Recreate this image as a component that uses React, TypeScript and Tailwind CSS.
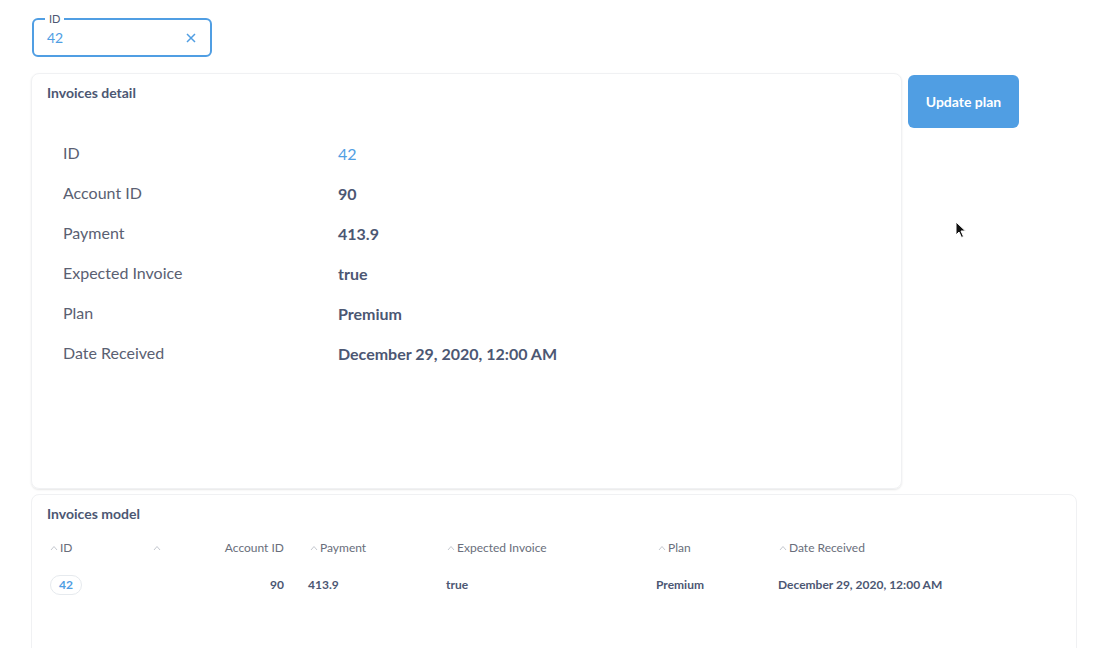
import React from "react";

const font = { fontFamily: "Lato, 'Noto Sans', sans-serif" };

const Caret = () => (
  <svg width="8" height="6" viewBox="0 0 8 6" className="shrink-0">
    <path d="M1 5 L4 1.5 L7 5" fill="none" stroke="#c4c8cf" strokeWidth="1" />
  </svg>
);

const detailRows: { label: string; value: string; link?: boolean }[] = [
  { label: "ID", value: "42", link: true },
  { label: "Account ID", value: "90" },
  { label: "Payment", value: "413.9" },
  { label: "Expected Invoice", value: "true" },
  { label: "Plan", value: "Premium" },
  { label: "Date Received", value: "December 29, 2020, 12:00 AM" },
];

const cols = "grid grid-cols-[103px_155px_138px_210px_122px_1fr]";

const App = () => {
  return (
    <div
      className="relative w-[1104px] h-[648px] overflow-hidden bg-white text-[#4c5773]"
      style={font}
    >
      {/* filter widget */}
      <div className="pl-[32px] pt-[18px]">
        <div className="relative w-[180px] h-[39px] rounded-md border-2 border-[#509ee3] flex items-center justify-between pl-[13px] pr-[14px]">
          <span className="absolute -top-[8px] left-[11px] bg-white px-[4px] text-[11px] leading-[14px] text-[#4c5773]">
            ID
          </span>
          <span className="text-[14px] text-[#509ee3]">42</span>
          <svg width="10" height="10" viewBox="0 0 10 10">
            <path d="M1 1 L9 9 M9 1 L1 9" stroke="#509ee3" strokeWidth="1.5" />
          </svg>
        </div>
      </div>

      {/* detail card + button */}
      <div className="flex items-start gap-[6px] pl-[31px] mt-[16px]">
        <div className="w-[871px] h-[416px] rounded-lg border border-[#f0f1f3] shadow-[0_1px_2px_rgba(0,0,0,0.1)] pl-[15px] pr-4 pt-[10px]">
          <h2 className="text-[14px] leading-[17px] font-bold text-[#4c5773]">
            Invoices detail
          </h2>
          <div className="mt-[33px] pl-4">
            {detailRows.map((r) => (
              <div key={r.label} className="grid grid-cols-[275px_1fr] h-[40px] items-center">
                <span className="text-[16px] text-[#5a6072] -mt-[2px]">{r.label}</span>
                <span
                  className={
                    "text-[16px] font-bold " +
                    (r.link ? "text-[#509ee3] font-normal" : "text-[#4c5773]")
                  }
                >
                  {r.value}
                </span>
              </div>
            ))}
          </div>
        </div>
        <button className="mt-[2px] w-[111px] h-[53px] rounded-md bg-[#509ee3] text-white text-[14px] font-bold">
          Update plan
        </button>
      </div>

      {/* model card */}
      <div className="ml-[31px] mt-[5px] w-[1046px] h-[200px] rounded-lg border border-[#f0f1f3] pl-[15px] pr-4 pt-[10px]">
        <h2 className="text-[14px] leading-[17px] font-bold text-[#4c5773]">
          Invoices model
        </h2>
        <div className="-ml-[5px] mt-[10px] text-[12px]">
          <div className={cols + " h-[32px] items-center text-[#696e7b]"}>
            <div className="flex items-center gap-[2px] pl-[8px]">
              <Caret />
              <span>ID</span>
            </div>
            <div className="flex items-center justify-between pl-[8px] pr-[16px]">
              <Caret />
              <span>Account ID</span>
            </div>
            <div className="flex items-center gap-[2px] pl-[10px]">
              <Caret />
              <span>Payment</span>
            </div>
            <div className="flex items-center gap-[2px] pl-[9px]">
              <Caret />
              <span>Expected Invoice</span>
            </div>
            <div className="flex items-center gap-[2px] pl-[10px]">
              <Caret />
              <span>Plan</span>
            </div>
            <div className="flex items-center gap-[2px] pl-[9px]">
              <Caret />
              <span>Date Received</span>
            </div>
          </div>
          <div className={cols + " mt-[1px] h-[40px] items-center font-bold text-[#4c5773]"}>
            <div className="pl-[8px]">
              <span className="inline-flex items-center h-[20px] px-[8px] rounded-full border border-[#e6eaee] text-[#509ee3]">
                42
              </span>
            </div>
            <div className="text-right pr-[16px]">90</div>
            <div className="pl-[8px]">413.9</div>
            <div className="pl-[8px]">true</div>
            <div className="pl-[8px]">Premium</div>
            <div className="pl-[8px]">December 29, 2020, 12:00 AM</div>
          </div>
        </div>
      </div>

      {/* mouse cursor */}
      <svg
        className="absolute left-[955px] top-[221px]"
        width="12"
        height="18"
        viewBox="0 0 12 18"
      >
        <path
          d="M1 1 L1 14 L4 11 L6.5 16.5 L8.5 15.5 L6 10 L10.5 10 Z"
          fill="#111"
          stroke="#fff"
          strokeWidth="1"
        />
      </svg>
    </div>
  );
};

export default App;
